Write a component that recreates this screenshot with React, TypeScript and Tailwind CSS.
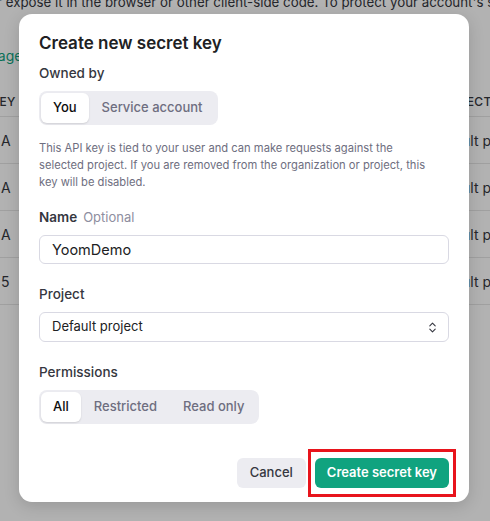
import { ChevronsUpDown } from 'lucide-react';

const font = { fontFamily: 'Inter, "Noto Sans", sans-serif' };

function Segmented({ options, active }: { options: string[]; active: string }) {
  return (
    <div className="inline-flex self-start rounded-lg bg-[#ececf1] p-[2px]">
      {options.map((o) => (
        <div
          key={o}
          className={
            o === active
              ? 'flex h-[30px] items-center rounded-md bg-white px-3 text-[13px] font-medium text-[#0d0d0d] shadow-[0_1px_2px_rgba(0,0,0,0.12)]'
              : 'flex h-[30px] items-center px-[13px] text-[13px] font-medium text-[#6e6e80]'
          }
        >
          {o}
        </div>
      ))}
    </div>
  );
}

function BackgroundPage() {
  const rows = ['A', 'A', 'A', '5'];
  return (
    <div className="h-[521px] w-[490px] overflow-hidden bg-white text-[#353740]">
      <div className="-ml-[3px] -mt-[8px] whitespace-nowrap text-[13.3px] leading-[20px]">
        r expose it in the browser or other client-side code. To protect your account's security
      </div>
      <div className="-ml-[31px] mt-[34px] text-[14px] leading-[20px] text-[#10a37f]">Manage</div>
      <div className="mt-[22px]">
        <div className="flex h-[29px] items-center whitespace-nowrap border-b border-[#e5e5e5] text-[12px] font-medium tracking-wide">
          <span className="-ml-[9px] w-[472px] shrink-0">KEY</span>
          <span className="-ml-[29px] shrink-0">PROJECT</span>
        </div>
        {rows.map((r, i) => (
          <div key={i} className="flex h-[47px] items-center whitespace-nowrap border-b border-[#e5e5e5] text-[14px]">
            <span className="w-[431px] shrink-0 pl-[1px]">{r}</span>
            <span className="shrink-0">Default project</span>
          </div>
        ))}
      </div>
    </div>
  );
}

export default function App() {
  return (
    <div className="relative h-[521px] w-[490px] overflow-hidden" style={font}>
      <BackgroundPage />
      <div className="absolute inset-0 flex items-start bg-black/30 pl-[19px] pt-[14px]">
        <div className="flex h-[488px] w-[450px] flex-col rounded-[13px] bg-white px-5 pt-[17px] shadow-[0_4px_16px_rgba(0,0,0,0.15)]">
          <h2 className="text-[17px] font-semibold leading-[24px] text-[#202123]">Create new secret key</h2>
          <div className="mt-2 text-[13.5px] font-medium leading-[20px] text-[#353740]">Owned by</div>
          <div className="mt-2 flex">
            <Segmented options={['You', 'Service account']} active="You" />
          </div>
          <p className="mt-[15px] whitespace-nowrap text-[11.2px] leading-[17px] text-[#6e6e80]">
            This API key is tied to your user and can make requests against the
            <br />
            selected project. If you are removed from the organization or project, this
            <br />
            key will be disabled.
          </p>
          <div className="mt-4 flex items-baseline gap-[6px] leading-[20px]">
            <span className="text-[13.5px] font-semibold text-[#353740]">Name</span>
            <span className="text-[13px] text-[#8e8ea0]">Optional</span>
          </div>
          <div className="mt-2 flex h-[29px] items-center rounded-md border border-[#d9d9e3] px-3 text-[14.5px] text-[#202123]">
            YoomDemo
          </div>
          <div className="mt-5 text-[13.5px] font-medium leading-[20px] text-[#353740]">Project</div>
          <div className="mt-2 flex h-[30px] items-center justify-between rounded-md border border-[#d9d9e3] pl-3 pr-[9px] text-[13px] text-[#202123]">
            <span>Default project</span>
            <ChevronsUpDown size={13} strokeWidth={2} className="text-[#353740]" />
          </div>
          <div className="mt-5 text-[13.5px] font-medium leading-[20px] text-[#353740]">Permissions</div>
          <div className="mt-2 flex">
            <Segmented options={['All', 'Restricted', 'Read only']} active="All" />
          </div>
          <div className="mt-[34px] flex justify-end gap-[9px]">
            <button className="h-[30px] rounded-md bg-[#ececf1] px-[13px] text-[13px] font-medium text-[#353740]">
              Cancel
            </button>
            <div className="relative">
              <button className="h-[30px] rounded-md bg-[#10a37f] px-3 text-[13px] font-semibold text-white">
                Create secret key
              </button>
              <div className="pointer-events-none absolute -inset-x-[7px] -inset-y-[9px] border-[3px] border-[#e8141c]" />
            </div>
          </div>
        </div>
      </div>
    </div>
  );
}
